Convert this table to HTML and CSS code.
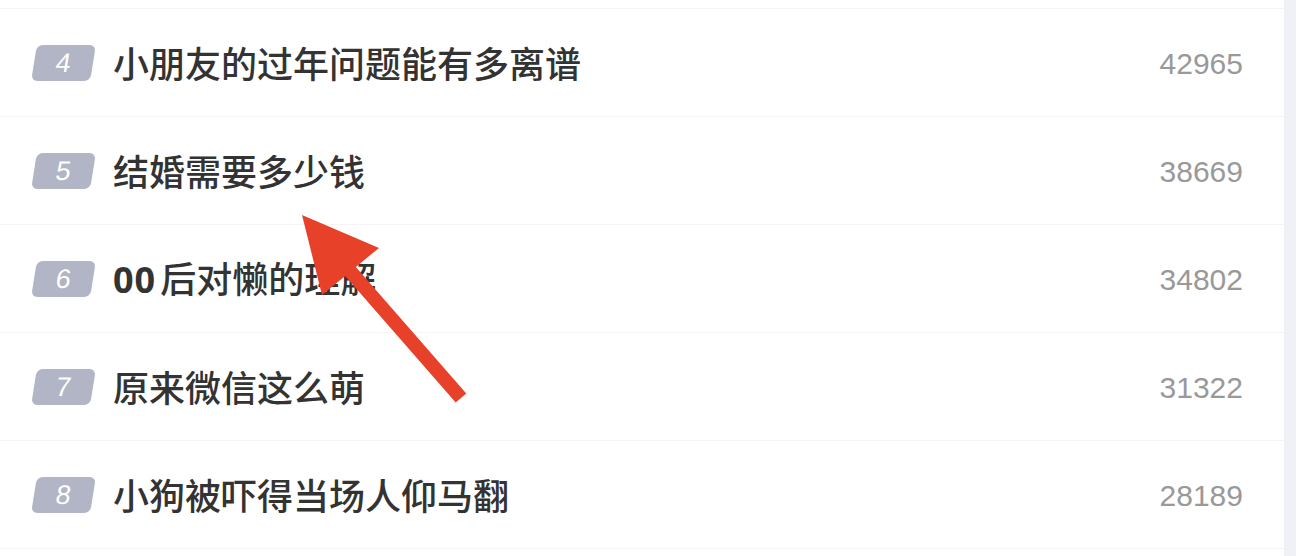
FILE: index.html
```html
<!DOCTYPE html>
<html lang="zh-CN">
<head>
    <meta charset="UTF-8">
    <meta name="viewport" content="width=device-width, initial-scale=1.0">
    <title>热搜榜</title>
    <link rel="stylesheet" href="styles.css">
</head>
<body>
    <div class="page">
        <div class="list">
            <div class="row-tail"></div>
            <div class="row">
                <span class="rank"><span class="rank-num">4</span></span>
                <span class="title">小朋友的过年问题能有多离谱</span>
                <span class="count">42965</span>
            </div>
            <div class="row">
                <span class="rank"><span class="rank-num">5</span></span>
                <span class="title">结婚需要多少钱</span>
                <span class="count">38669</span>
            </div>
            <div class="row">
                <span class="rank"><span class="rank-num">6</span></span>
                <span class="title"><span class="latin">00</span>后对懒的理解</span>
                <span class="count">34802</span>
            </div>
            <div class="row">
                <span class="rank"><span class="rank-num">7</span></span>
                <span class="title">原来微信这么萌</span>
                <span class="count">31322</span>
            </div>
            <div class="row">
                <span class="rank"><span class="rank-num">8</span></span>
                <span class="title">小狗被吓得当场人仰马翻</span>
                <span class="count">28189</span>
            </div>
        </div>
        <div class="scroll-track"></div>
    </div>

    <!-- annotation arrow -->
    <svg class="arrow" width="1296" height="556" viewBox="0 0 1296 556">
        <polygon fill="#e8412a" points="302,215 379,248 355.8,266.9 466.3,393.4 455.7,402.6 345.2,276.1 322,295" />
    </svg>
</body>
</html>
```

FILE: styles.css
```css
body {
    margin: 0;
    background-color: rgb(255, 255, 255);
    font-family: "Noto Sans CJK SC", "Noto Sans", sans-serif;
    overflow: hidden;
}
.page {
    display: flex;
    height: 556px;
}
.list {
    flex: 1;
}
.row-tail {
    height: 8px;
    border-bottom: 1px solid rgb(244, 244, 246);
}
.row {
    display: flex;
    align-items: center;
    height: 107px;
    padding: 0 41px 0 33px;
    border-bottom: 1px solid rgb(244, 244, 246);
}
.rank {
    display: flex;
    align-items: center;
    justify-content: center;
    width: 59px;
    height: 36px;
    margin-left: 1px;
    margin-right: 20px;
    background-color: rgb(177, 181, 197);
    border-radius: 6px;
    transform: skewX(-9deg);
}
.rank-num {
    color: rgb(255, 255, 255);
    font-family: "Liberation Sans", sans-serif;
    font-size: 27px;
}
.title {
    flex: 1;
    color: rgb(51, 51, 51);
    font-size: 36px;
    font-weight: 500;
    margin-top: -2px;
}
.latin {
    font-family: "Noto Sans", sans-serif;
    font-weight: 700;
    letter-spacing: 1px;
    margin-right: 4px;
}
.count {
    color: rgb(153, 153, 153);
    font-family: "Liberation Sans", sans-serif;
    font-size: 30px;
    margin-top: 3px;
}
.scroll-track {
    width: 12px;
    background-color: rgb(240, 241, 246);
}
.arrow {
    position: absolute;
    left: 0;
    top: 0;
}
```
